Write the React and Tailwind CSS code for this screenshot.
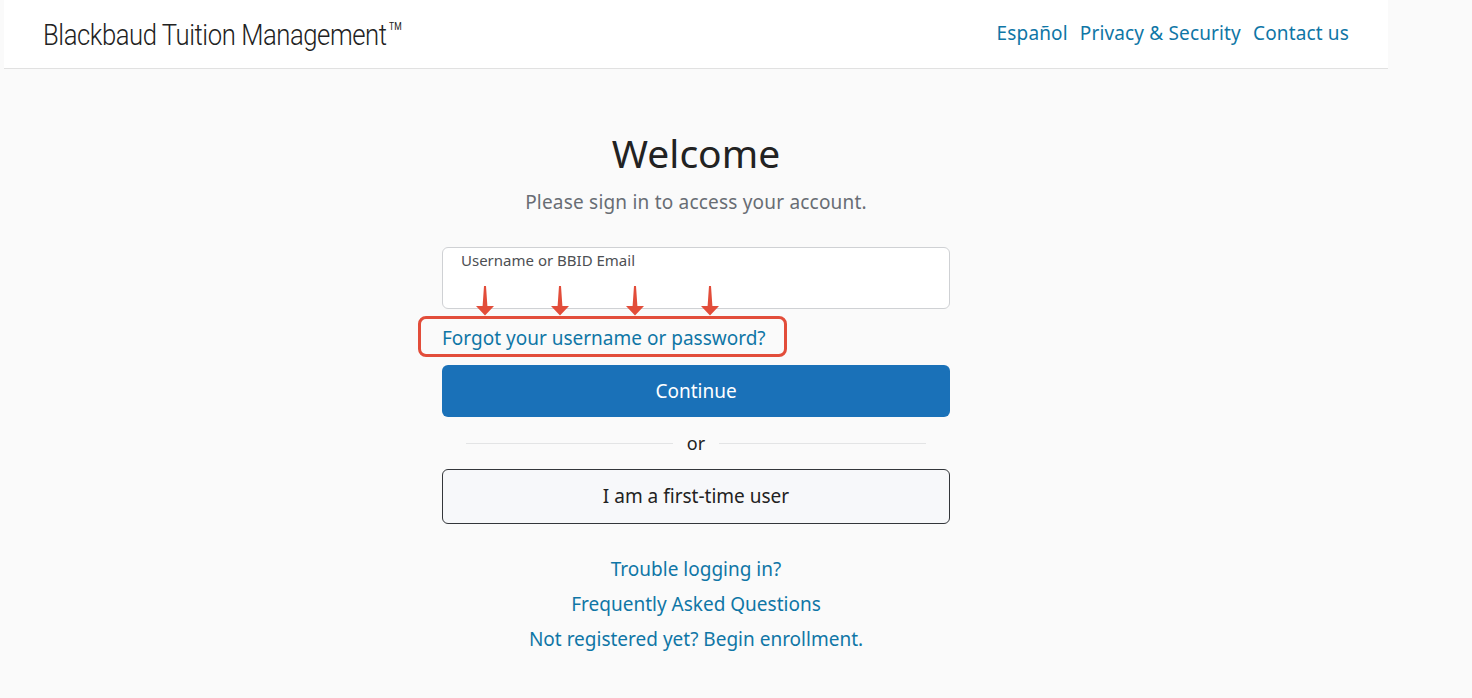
const sans = { fontFamily: '"Noto Sans", "Open Sans", sans-serif' }

function Arrow() {
  return (
    <svg width="20" height="30" viewBox="0 0 20 30" className="block">
      <path d="M9 0 L11 0 L12.4 20 L19 20 L10 29.5 L1 20 L7.6 20 Z" fill="#e24d3a" />
    </svg>
  )
}

export default function App() {
  return (
    <div className="min-h-[698px] bg-[#fafafa]" style={sans}>
      <div className="ml-1 w-[1384px]">
        <header className="flex h-[69px] items-center justify-between border-b border-[#e1e1e1] bg-white px-[39px]">
          <div
            className="flex origin-left scale-x-[0.855] items-start whitespace-nowrap text-[30px] font-light tracking-[-0.5px] text-[#222]"
            style={{ fontFamily: 'Roboto, sans-serif' }}
          >
            Blackbaud Tuition Management
            <span className="ml-[3px] mt-[10px] text-[10px] font-normal leading-none tracking-normal">TM</span>
          </div>
          <nav className="-mt-[2px] flex gap-[12px] text-[19px] tracking-[0.15px] text-[#0f76a6]">
            <a href="#">Español</a>
            <a href="#">Privacy &amp; Security</a>
            <a href="#">Contact us</a>
          </nav>
        </header>

        <main className="flex flex-col items-center">
          <h1 className="mt-[60px] text-[39px] leading-[48px] text-[#222]">Welcome</h1>
          <p className="mt-[12px] text-[19px] leading-[26px] tracking-[0.2px] text-[#686d74]">
            Please sign in to access your account.
          </p>

          <div className="relative mt-[32px] w-[508px]">
            <div className="h-[62px] rounded-[6px] border border-[#cfd1d4] bg-white px-[18px] pt-[1px] text-[15px] text-[#4d4f53]">
              Username or BBID Email
            </div>
            <div className="absolute left-[33px] top-[39px] flex gap-[55px]">
              <Arrow />
              <Arrow />
              <Arrow />
              <Arrow />
            </div>
          </div>

          <div className="mt-[7px] w-[508px]">
            <div className="relative inline-block">
              <a href="#" className="block pb-[7px] pt-[10px] text-[19px] leading-[24px] text-[#0f76a6]">
                Forgot your username or password?
              </a>
              <div className="absolute -left-[24px] -right-[21px] top-0 bottom-0 rounded-[8px] border-[3px] border-[#e24d3a]" />
            </div>
          </div>

          <button className="mt-[8px] h-[52px] w-[508px] rounded-[6px] bg-[#1a71b8] text-[19px] text-white">
            Continue
          </button>

          <div className="mt-[14px] flex w-[460px] items-center gap-[14px]">
            <div className="h-px flex-1 bg-[#e3e4e5]" />
            <span className="text-[18px] leading-[24px] text-[#222]">or</span>
            <div className="h-px flex-1 bg-[#e3e4e5]" />
          </div>

          <button className="mt-[14px] h-[55px] w-[508px] rounded-[6px] border border-[#33363a] bg-[#f7f8fa] text-[19px] text-[#222]">
            I am a first-time user
          </button>

          <div className="mt-[32px] flex flex-col items-center gap-[9px] text-[19px] leading-[26px] text-[#0f76a6]">
            <a href="#">Trouble logging in?</a>
            <a href="#">Frequently Asked Questions</a>
            <a href="#">Not registered yet? Begin enrollment.</a>
          </div>
        </main>
      </div>
    </div>
  )
}
